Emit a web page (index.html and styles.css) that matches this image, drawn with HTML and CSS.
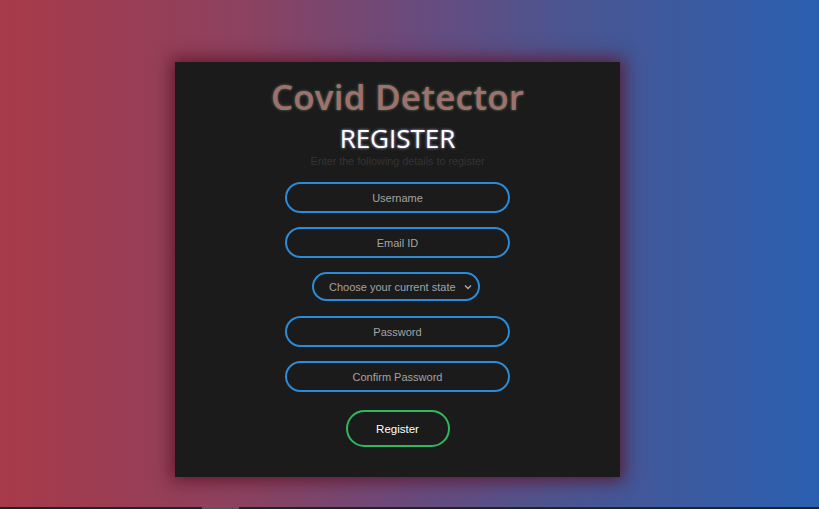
FILE: index.html
```html
<!DOCTYPE html>
<html lang="en">
<head>
<meta charset="utf-8">
<title>Covid Detector - Register</title>
<link rel="stylesheet" href="styles.css">
</head>
<body>
<div class="page">
  <form class="card">
    <h1 class="title">Covid Detector</h1>
    <h2 class="heading">REGISTER</h2>
    <p class="sub">Enter the following details to register</p>
    <input class="field" type="text" placeholder="Username">
    <input class="field" type="email" placeholder="Email ID">
    <div class="select-wrap">
      <select class="select">
        <option>Choose your current state</option>
      </select>
      <svg class="chev" width="8" height="6" viewBox="0 0 8 6"><path d="M1 1.5 L4 4.5 L7 1.5" fill="none" stroke="#b0b0b0" stroke-width="1.3"/></svg>
    </div>
    <input class="field" type="password" placeholder="Password">
    <input class="field" type="password" placeholder="Confirm Password">
    <button class="btn" type="button">Register</button>
  </form>
</div>
<div class="hscroll"><div class="thumb"></div></div>
</body>
</html>
```
FILE: styles.css
```css
html, body {
  margin: 0;
  height: 100%;
}
body {
  background: linear-gradient(90deg, #a83a49 0%, #8c4260 30%, #6a4a7c 50%, #4a5591 70%, #2a5fb0 100%);
  font-family: "Liberation Sans", Arial, sans-serif;
  overflow: hidden;
}
.page {
  padding-top: 62px;
  padding-left: 175px;
}
.card {
  width: 445px;
  height: 415px;
  box-sizing: border-box;
  background: #1b1b1b;
  box-shadow: 0 0 16px 4px rgba(90, 20, 40, 0.85);
  display: flex;
  flex-direction: column;
  align-items: center;
  padding-top: 15px;
}
.title {
  margin: 0;
  font-family: "Open Sans", sans-serif;
  font-weight: 600;
  font-size: 35px;
  letter-spacing: 0.2px;
  line-height: 40px;
  color: #a0706e;
  text-shadow: 0 0 3px rgba(140, 200, 140, 0.55);
}
.heading {
  margin: 6px 0 0;
  font-family: "Open Sans", sans-serif;
  font-weight: 400;
  font-size: 26px;
  line-height: 30px;
  color: #ffffff;
  text-shadow: 0 0 3px rgba(200, 200, 255, 0.9);
}
.sub {
  margin: 2px 0 14px;
  font-size: 10.8px;
  line-height: 13px;
  color: #343434;
}
.field {
  width: 225px;
  height: 31px;
  box-sizing: border-box;
  border: 2px solid #2b8bd6;
  border-radius: 16px;
  background: transparent;
  text-align: center;
  font-family: "Liberation Sans", Arial, sans-serif;
  font-size: 11px;
  color: #ccc;
  margin-bottom: 14px;
  outline: none;
}
.field::placeholder {
  color: #a3a3a3;
}
.select-wrap {
  position: relative;
  margin-bottom: 15px;
}
.select {
  appearance: none;
  -webkit-appearance: none;
  width: 168px;
  height: 29px;
  box-sizing: border-box;
  border: 2px solid #2b8bd6;
  border-radius: 15px;
  background: transparent;
  color: #a3a3a3;
  font-family: "Liberation Sans", Arial, sans-serif;
  font-size: 11px;
  padding: 0 0 0 15px;
  outline: none;
  display: block;
  margin-left: -3px;
}
.chev {
  position: absolute;
  right: 8px;
  top: 12px;
}
.btn {
  margin-top: 4px;
  width: 104px;
  height: 37px;
  border: 2px solid #2fb95d;
  border-radius: 19px;
  background: transparent;
  color: #ffffff;
  font-family: "Liberation Sans", Arial, sans-serif;
  font-size: 11.5px;
  font-weight: 400;
}
.hscroll {
  position: fixed;
  left: 0;
  right: 0;
  bottom: 0;
  height: 2px;
  background: #1c2628;
}
.thumb {
  margin-left: 202px;
  width: 37px;
  height: 2px;
  background: #4f5a5a;
}
```
